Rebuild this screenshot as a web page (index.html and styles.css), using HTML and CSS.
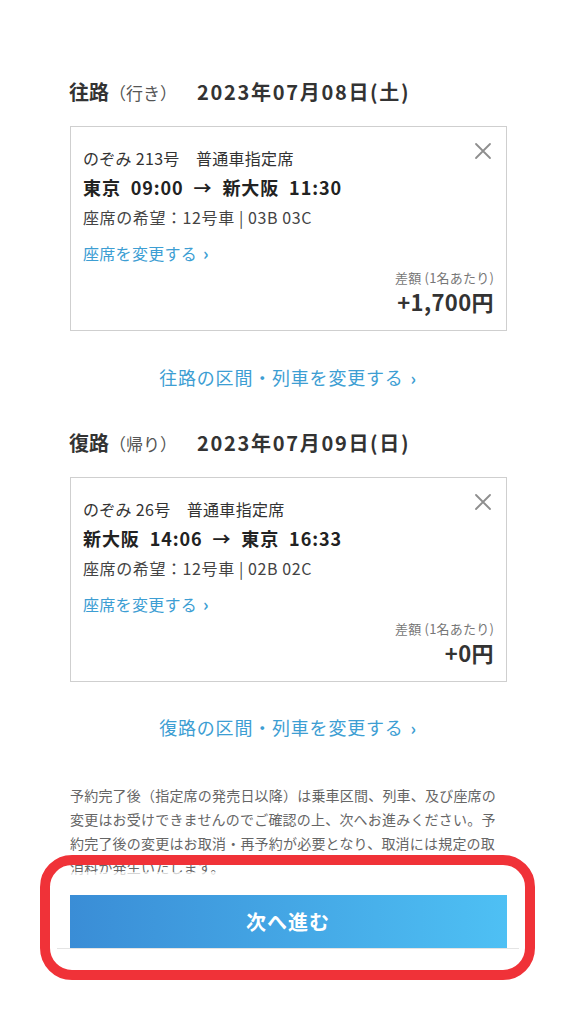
FILE: index.html
```html
<!DOCTYPE html>
<html lang="ja">
<head>
<meta charset="utf-8">
<title>予約内容の確認</title>
<link rel="stylesheet" href="styles.css">
</head>
<body>
<main class="page">
  <section class="leg">
    <h2 class="leg-title"><span class="leg-name">往路</span><span class="leg-sub">（行き）</span><span class="leg-date">2023年07月08日(土)</span></h2>
    <div class="card">
      <button class="close" aria-label="削除"><svg viewBox="0 0 18 18" width="18" height="18"><path d="M2 2 L16 16 M16 2 L2 16" stroke="#8e8e8e" stroke-width="1.8" fill="none" stroke-linecap="round"/></svg></button>
      <div class="train">のぞみ 213号　普通車指定席</div>
      <div class="route">東京&nbsp; 09:00 &nbsp;→&nbsp; 新大阪&nbsp; 11:30</div>
      <div class="seat">座席の希望：12号車 | 03B 03C</div>
      <a class="seat-link" href="#">座席を変更する <span class="chev">›</span></a>
      <div class="price">
        <div class="price-label">差額 (1名あたり)</div>
        <div class="price-value">+1,700円</div>
      </div>
    </div>
    <a class="change-link" href="#">往路の区間・列車を変更する <span class="chev">›</span></a>
  </section>

  <section class="leg">
    <h2 class="leg-title"><span class="leg-name">復路</span><span class="leg-sub">（帰り）</span><span class="leg-date">2023年07月09日(日)</span></h2>
    <div class="card">
      <button class="close" aria-label="削除"><svg viewBox="0 0 18 18" width="18" height="18"><path d="M2 2 L16 16 M16 2 L2 16" stroke="#8e8e8e" stroke-width="1.8" fill="none" stroke-linecap="round"/></svg></button>
      <div class="train">のぞみ 26号　普通車指定席</div>
      <div class="route">新大阪&nbsp; 14:06 &nbsp;→&nbsp; 東京&nbsp; 16:33</div>
      <div class="seat">座席の希望：12号車 | 02B 02C</div>
      <a class="seat-link" href="#">座席を変更する <span class="chev">›</span></a>
      <div class="price">
        <div class="price-label">差額 (1名あたり)</div>
        <div class="price-value">+0円</div>
      </div>
    </div>
    <a class="change-link" href="#">復路の区間・列車を変更する <span class="chev">›</span></a>
  </section>

  <p class="notice">予約完了後（指定席の発売日以降）は乗車区間、列車、及び座席の変更はお受けできませんのでご確認の上、次へお進みください。予約完了後の変更はお取消・再予約が必要となり、取消には規定の取消料が発生いたします。</p>
</main>

<footer class="footer">
  <button class="next">次へ進む</button>
  <div class="footer-rule"></div>
</footer>

<div class="highlight" aria-hidden="true"></div>
</body>
</html>
```

FILE: styles.css
```css
* { box-sizing: border-box; }

html, body {
  margin: 0;
  padding: 0;
  background: #fff;
}

body {
  font-family: "Noto Sans CJK JP", "Noto Sans", sans-serif;
  color: #333;
  width: 576px;
  height: 1024px;
  overflow: hidden;
}

.page {
  padding: 77px 70px 0 70px;
}

.leg-title {
  margin: 0;
  height: 30px;
  line-height: 30px;
  font-size: 20px;
  font-weight: 700;
  color: #333;
  display: flex;
  align-items: baseline;
  white-space: nowrap;
}

.leg-name {
  font-weight: 700;
  margin-left: -1px;
}

.leg-sub {
  font-size: 17px;
  font-weight: 400;
  color: #555;
  margin-right: 20px;
}

.leg-date {
  font-size: 20px;
  font-weight: 700;
  letter-spacing: 1.7px;
}

.card {
  position: relative;
  margin-top: 19px;
  width: 437px;
  border: 1px solid #cfcfcf;
  padding: 18px 12px 15px 12px;
}

.close {
  position: absolute;
  top: 15px;
  right: 14px;
  width: 18px;
  height: 18px;
  padding: 0;
  border: 0;
  background: none;
  display: block;
}

.close svg { display: block; }

.train {
  font-size: 16px;
  line-height: 26px;
  color: #333;
  letter-spacing: 0.3px;
}

.route {
  font-size: 18px;
  font-weight: 700;
  line-height: 32px;
  color: #222;
  letter-spacing: 0.9px;
}

.seat {
  font-size: 16px;
  line-height: 28px;
  color: #444;
  letter-spacing: 0.6px;
}

.seat-link {
  display: block;
  margin-top: 8px;
  font-size: 16px;
  line-height: 28px;
  color: #3d9ed3;
  text-decoration: none;
  letter-spacing: 0.3px;
}

.chev {
  font-weight: 700;
  font-size: 17px;
  margin-left: 2px;
}

.price {
  margin-top: 2px;
  text-align: right;
}

.price-label {
  font-size: 13px;
  line-height: 18px;
  color: #777;
  letter-spacing: 0.2px;
}

.price-value {
  font-size: 22px;
  font-weight: 700;
  line-height: 28px;
  color: #333;
  letter-spacing: 0.4px;
}

.change-link {
  display: block;
  margin-top: 31px;
  margin-bottom: 35px;
  text-align: center;
  font-size: 18px;
  line-height: 30px;
  color: #3d9ed3;
  text-decoration: none;
  letter-spacing: 0.8px;
}

.leg + .leg .change-link {
  margin-top: 30px;
  margin-bottom: 40px;
}

.notice {
  margin: 0;
  width: 427px;
  font-size: 14px;
  line-height: 24px;
  letter-spacing: 0.2px;
  color: #666;
}

.footer {
  position: fixed;
  left: 0;
  right: 0;
  bottom: 0;
  height: 152px;
  padding-top: 23px;
  background: linear-gradient(to bottom, rgba(255,255,255,0.72) 0, rgba(255,255,255,0.72) 76px, #fff 76px);
  display: flex;
  flex-direction: column;
  align-items: center;
}

.next {
  width: 437px;
  height: 53px;
  border: 0;
  margin: 0;
  background: linear-gradient(to right, #3a8dd6, #4ec0f4);
  color: #fff;
  font-family: "Noto Sans CJK JP", "Noto Sans", sans-serif;
  font-size: 20px;
  font-weight: 700;
  letter-spacing: 1px;
}

.footer-rule {
  width: 462px;
  height: 1px;
  background: #e4e4e4;
}

.highlight {
  position: fixed;
  left: 40px;
  top: 855px;
  width: 495px;
  height: 125px;
  border: 10px solid #f03238;
  border-radius: 32px;
  pointer-events: none;
}
```
